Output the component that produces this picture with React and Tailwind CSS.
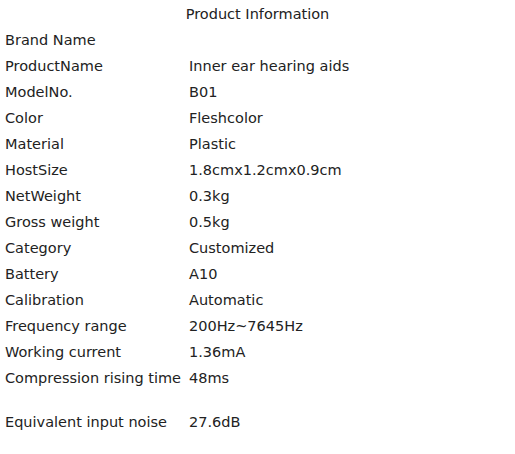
export default function App() {
  const rows = [
    ["Brand Name", ""],
    ["ProductName", "Inner ear hearing aids"],
    ["ModelNo.", "B01"],
    ["Color", "Fleshcolor"],
    ["Material", "Plastic"],
    ["HostSize", "1.8cmx1.2cmx0.9cm"],
    ["NetWeight", "0.3kg"],
    ["Gross weight", "0.5kg"],
    ["Category", "Customized"],
    ["Battery", "A10"],
    ["Calibration", "Automatic"],
    ["Frequency range", "200Hz~7645Hz"],
    ["Working current", "1.36mA"],
    ["Compression rising time", "48ms"],
  ];
  return (
    <div
      className="w-[515px] h-[454px] bg-white text-[#222222] text-[14.5px] leading-[26px]"
      style={{ fontFamily: '"DejaVu Sans", Verdana, sans-serif' }}
    >
      <div className="pt-[1px] text-center">Product Information</div>
      <div className="grid grid-cols-[189px_1fr]">
        {rows.map(([k, v]) => (
          <div key={k} className="contents">
            <div className="pl-[5px] whitespace-nowrap">{k}</div>
            <div className="h-[26px]">{v}</div>
          </div>
        ))}
        <div className="pl-[5px] pt-[18px] whitespace-nowrap">Equivalent input noise</div>
        <div className="pt-[18px]">27.6dB</div>
      </div>
    </div>
  );
}
